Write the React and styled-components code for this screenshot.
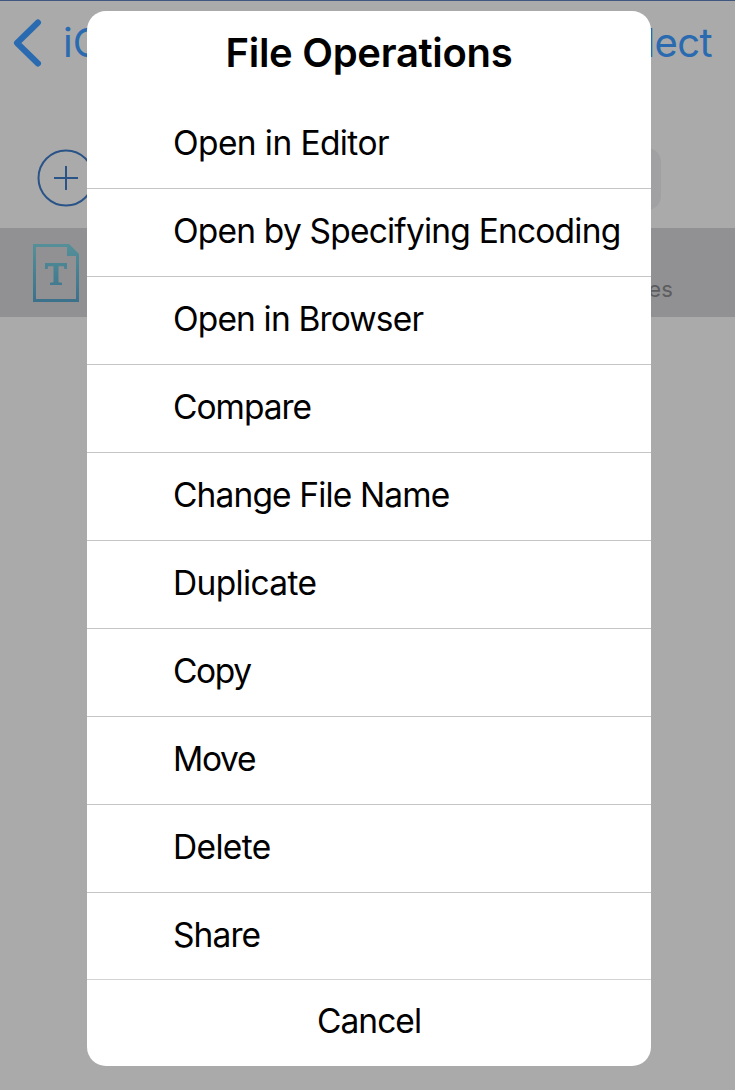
import React from 'react';
import styled, { createGlobalStyle } from 'styled-components';

const theme = {
  colors: {
    dimmed: '#aaaaaa',
    row: '#919193',
    field: '#a1a1a3',
    link: '#296ab0',
    outline: '#2a5487',
    caption: '#5d5d60',
    divider: '#c5c5c7',
    white: '#ffffff',
    black: '#000000'
  },
  font: "Inter, 'Liberation Sans', sans-serif"
};

const actions = [
  { label: 'Open in Editor', tracking: -0.6 },
  { label: 'Open by Specifying Encoding', tracking: -0.8 },
  { label: 'Open in Browser', tracking: -0.85 },
  { label: 'Compare', tracking: -1 },
  { label: 'Change File Name', tracking: -0.87 },
  { label: 'Duplicate', tracking: -0.65 },
  { label: 'Copy', tracking: -1.4 },
  { label: 'Move', tracking: -1.3 },
  { label: 'Delete', tracking: -0.65 },
  { label: 'Share', tracking: -0.9 }
];

const GlobalStyle = createGlobalStyle`
  body {
    background: ${theme.colors.dimmed};
    font-family: ${theme.font};
    margin: 0;
  }
  * {
    box-sizing: border-box;
  }
`;

const Screen = styled.div`
  background: ${theme.colors.dimmed};
  height: 1090px;
  overflow: hidden;
  position: relative;
  width: 735px;
`;

const NavBar = styled.header`
  align-items: center;
  border-top: 1px solid #40577f;
  color: ${theme.colors.link};
  display: flex;
  font-size: 40px;
  height: 128px;
  justify-content: space-between;
  line-height: 48px;
  padding: 0 22px 43px 13px;
`;

const BackLink = styled.div`
  align-items: center;
  display: flex;
  gap: 20px;
`;

const SelectLink = styled.div`
  letter-spacing: -0.6px;
  padding-right: 1px;
`;

const Toolbar = styled.div`
  align-items: center;
  display: flex;
  gap: 24px;
  height: 100px;
  padding: 0 74px 0 37px;
`;

const SearchField = styled.div`
  background: ${theme.colors.field};
  border-radius: 14px;
  flex: 1;
  height: 62px;
  margin-top: 2px;
`;

const FileRow = styled.div`
  align-items: center;
  background: ${theme.colors.row};
  display: flex;
  height: 89px;
  justify-content: space-between;
  padding: 0 62px 0 33px;
`;

const FileSize = styled.span`
  color: ${theme.colors.caption};
  font-size: 22px;
  letter-spacing: 0.2px;
  line-height: 28px;
  padding-top: 32px;
`;

const Sheet = styled.section`
  background: ${theme.colors.white};
  border-radius: 19px;
  color: ${theme.colors.black};
  display: flex;
  flex-direction: column;
  height: 1055px;
  left: 87px;
  overflow: hidden;
  position: absolute;
  top: 11px;
  width: 564px;
`;

const SheetTitle = styled.h1`
  font-size: 40px;
  font-weight: 600;
  height: 90px;
  letter-spacing: -0.3px;
  line-height: 49px;
  margin: 0;
  padding-top: 17px;
  text-align: center;
`;

const ActionList = styled.div`
  display: flex;
  flex-direction: column;
`;

const Action = styled.button`
  background: none;
  border: 0;
  border-bottom: 1px solid ${theme.colors.divider};
  color: inherit;
  font: 400 33.5px/42px ${theme.font};
  height: 88px;
  letter-spacing: ${props => props.$tracking}px;
  padding: 0 0 3px 86px;
  text-align: left;
  white-space: nowrap;
  &:last-child {
    border-bottom: 0;
    height: 86px;
    padding-bottom: 2px;
  }
`;

const CancelButton = styled.button`
  background: none;
  border: 0;
  border-top: 1px solid #d3d3d5;
  color: inherit;
  flex: 1;
  font: 400 33.5px/42px ${theme.font};
  letter-spacing: -0.95px;
  padding: 0 0 4px;
`;

const ChevronIcon = () => (
  <svg width="30" height="48" viewBox="0 0 30 48" fill="none">
    <path d="M25 3.5 L4 24 L25 44.5" stroke={theme.colors.link} strokeWidth="6" strokeLinecap="round" strokeLinejoin="round" />
  </svg>
);

const AddIcon = () => (
  <svg width="58" height="58" viewBox="0 0 58 58" fill="none" stroke={theme.colors.outline} strokeWidth="2">
    <circle cx="29" cy="29" r="27.5" />
    <path d="M17 29H41M29 17V41" />
  </svg>
);

const TextFileIcon = () => (
  <svg width="46" height="58" viewBox="0 0 46 58">
    <defs>
      <linearGradient id="page" x1="0" y1="0" x2="0" y2="58" gradientUnits="userSpaceOnUse">
        <stop offset="0" stopColor="#559099" />
        <stop offset="1" stopColor="#3b718b" />
      </linearGradient>
    </defs>
    <path d="M1.5 1.5H35L44.5 11V56.5H1.5Z" fill="none" stroke="url(#page)" strokeWidth="3" />
    <path d="M34 0H36L46 10V12H34Z" fill="url(#page)" />
    <path
      d="M12 19H34V25H31.3L31 22.3H25.5V38.3L29 38.8V41H17V38.8L20.5 38.3V22.3H15L14.7 25H12Z"
      fill="url(#page)"
    />
  </svg>
);

const App = () => (
  <>
    <GlobalStyle />
    <Screen>
      <NavBar>
        <BackLink>
          <ChevronIcon />
          <span>iCloud</span>
        </BackLink>
        <SelectLink>Select</SelectLink>
      </NavBar>
      <Toolbar>
        <AddIcon />
        <SearchField />
      </Toolbar>
      <FileRow>
        <TextFileIcon />
        <FileSize>bytes</FileSize>
      </FileRow>
      <Sheet>
        <SheetTitle>File Operations</SheetTitle>
        <ActionList>
          {actions.map(({ label, tracking }) => (
            <Action key={label} $tracking={tracking}>
              {label}
            </Action>
          ))}
        </ActionList>
        <CancelButton>Cancel</CancelButton>
      </Sheet>
    </Screen>
  </>
);

export default App;
